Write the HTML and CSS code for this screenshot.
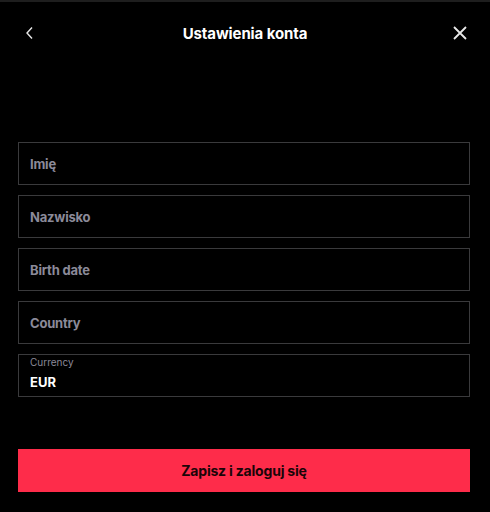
FILE: index.html
```html
<!DOCTYPE html>
<html lang="pl">
<head>
<meta charset="utf-8">
<link rel="stylesheet" href="styles.css">
</head>
<body>
<div class="page">
  <header class="header">
    <button class="icon-btn back" aria-label="Wstecz">
      <svg width="10" height="14" viewBox="0 0 10 14"><path d="M7 1.5 L2 7 L7 12.5" fill="none" stroke="#e8e8e8" stroke-width="1.4"/></svg>
    </button>
    <h1 class="title">Ustawienia konta</h1>
    <button class="icon-btn close" aria-label="Zamknij">
      <svg width="16" height="16" viewBox="0 0 16 16"><path d="M2 2 L14 14 M14 2 L2 14" fill="none" stroke="#e8e8e8" stroke-width="1.8"/></svg>
    </button>
  </header>
  <form class="form">
    <div class="field"><span class="placeholder">Imię</span></div>
    <div class="field"><span class="placeholder">Nazwisko</span></div>
    <div class="field"><span class="placeholder">Birth date</span></div>
    <div class="field"><span class="placeholder">Country</span></div>
    <div class="field filled">
      <span class="label">Currency</span>
      <span class="value">EUR</span>
    </div>
    <button type="button" class="submit">Zapisz i zaloguj się</button>
  </form>
</div>
</body>
</html>
```
FILE: styles.css
```css
html, body {
  margin: 0;
  padding: 0;
  background: #000;
}
body {
  font-family: "Inter", "Roboto", sans-serif;
  color: #fff;
}
.page {
  width: 490px;
  height: 512px;
  box-sizing: border-box;
  border-top: 2px solid #1e1e1e;
  background: #000;
}
.header {
  height: 62px;
  display: flex;
  align-items: center;
  justify-content: space-between;
  padding: 0 22px 0 22px;
}
.icon-btn {
  background: none;
  border: 0;
  padding: 0;
  width: 16px;
  height: 16px;
  display: flex;
  align-items: center;
  justify-content: center;
}
.title {
  margin: 0;
  font-size: 15px;
  font-weight: 700;
  letter-spacing: -0.1px;
  color: #fff;
}
.form {
  display: flex;
  flex-direction: column;
  gap: 10px;
  padding: 78px 20px 0 18px;
}
.field {
  height: 43px;
  box-sizing: border-box;
  border: 1px solid #3a3a3c;
  display: flex;
  flex-direction: column;
  justify-content: center;
  padding: 0 11px;
}
.placeholder {
  font-size: 13px;
  font-weight: 700;
  color: #8b8a99;
  letter-spacing: -0.2px;
}
.field.filled {
  justify-content: flex-start;
  padding-top: 0;
}
.label {
  font-size: 10px;
  color: #8b8a99;
  line-height: 14px;
}
.value {
  font-size: 13px;
  font-weight: 700;
  color: #fff;
  margin-top: 5px;
}
.submit {
  margin-top: 42px;
  height: 43px;
  border: 0;
  background: #fe2c4a;
  color: #1a0508;
  font-family: "Inter", "Roboto", sans-serif;
  font-size: 14px;
  font-weight: 700;
  letter-spacing: -0.2px;
}
```
